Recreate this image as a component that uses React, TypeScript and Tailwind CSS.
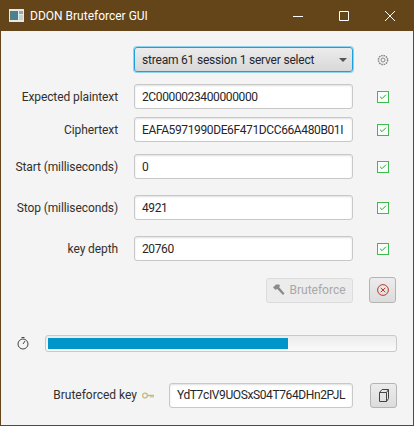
import { Check } from 'lucide-react'

const font = '[font-family:Roboto,"Noto_Sans",sans-serif]'

function CheckMark() {
  return (
    <div className="flex h-[12px] w-[12px] items-center justify-center border border-[#3fb950] bg-[#f8fff8]">
      <Check size={8} strokeWidth={3} className="text-[#2ea043]" />
    </div>
  )
}

function Row({ label, value, className }: { label: string; value: string; className: string }) {
  return (
    <div className={`flex h-[25px] items-center ${className}`}>
      <div className="w-[117px] text-right text-[12px] tracking-[-0.1px] text-[#33302c]">{label}</div>
      <div className="ml-[16px] flex h-[25px] w-[219px] items-center overflow-hidden whitespace-nowrap rounded-[3px] border border-[#c8c8c8] bg-white px-[7px] text-[12px] tracking-[-0.38px] text-[#26262a] shadow-[inset_0_1px_2px_#e0e0e0]">
        {value}
      </div>
      <div className="ml-[24px]">
        <CheckMark />
      </div>
    </div>
  )
}

export default function App() {
  return (
    <div className={`flex h-[426px] w-[414px] flex-col border border-t-0 border-[#64461a] bg-[#f4f4f4] ${font}`}>
      {/* Title bar */}
      <div className="-mx-px flex h-[31px] shrink-0 items-center bg-[#64451a] text-white">
        <svg width="15" height="13" viewBox="0 0 15 13" className="ml-[9px]">
          <rect width="15" height="13" fill="#e8e8e8" />
          <rect x="1" y="2" width="8" height="9" fill="#4f7f88" />
          <rect x="10" y="2" width="4" height="3" fill="#8fa9ae" />
          <rect x="10" y="6" width="4" height="5" fill="#c4d0d2" />
        </svg>
        <span className="ml-[6px] text-[12px]">DDON Bruteforcer GUI</span>
        <div className="ml-auto flex items-center">
          <svg width="10" height="10" viewBox="0 0 10 10" className="mr-[36px]">
            <path d="M0 5.5h10" stroke="#fff" />
          </svg>
          <svg width="10" height="10" viewBox="0 0 10 10" className="mr-[36px]">
            <path d="M.5.5h9v9h-9z" stroke="#fff" fill="none" />
          </svg>
          <svg width="10" height="10" viewBox="0 0 10 10" className="mr-[19px]">
            <path d="M0 0l10 10M10 0L0 10" stroke="#fff" />
          </svg>
        </div>
      </div>

      {/* Server select */}
      <div className="mt-[16px] flex h-[25px] items-center">
        <div className="ml-[133px] flex h-[25px] w-[219px] items-center rounded-[3px] border border-[#1ba1e2] bg-linear-to-b from-[#ececec] to-[#d8d8d8] pl-[7px] text-[12px] tracking-[-0.2px] text-[#26262a] shadow-[0_0_0_1px_#8fd3ef]">
          stream 61 session 1 server select
          <div className="ml-auto mr-[5px] h-0 w-0 border-x-[4px] border-t-[4px] border-x-transparent border-t-[#555]" />
        </div>
        <svg width="12" height="12" viewBox="0 0 12 12" className="ml-[24px]" fill="none" stroke="#888">
          <circle cx="6" cy="6" r="2" />
          <circle cx="6" cy="6" r="4.6" strokeDasharray="1.6 0.8" strokeWidth="1.5" />
        </svg>
      </div>

      <Row className="mt-[12px]" label="Expected plaintext" value="2C0000023400000000" />
      <Row className="mt-[8px]" label="Ciphertext" value="EAFA5971990DE6F471DCC66A480B01I" />
      <Row className="mt-[12px]" label="Start (milliseconds)" value="0" />
      <Row className="mt-[16px]" label="Stop (milliseconds)" value="4921" />
      <Row className="mt-[16px]" label="key depth" value="20760" />

      {/* Actions */}
      <div className="mt-[16px] flex h-[26px] items-center">
        <div className="ml-[265px] flex h-[25px] w-[87px] items-center justify-center gap-[4px] rounded-[3px] border border-[#dcdcdc] bg-[#ececec] text-[12px] text-[#a8a8a8]">
          <svg width="12" height="12" viewBox="0 0 12 12" fill="#8a8a8a">
            <path d="M0 3.5L3 .5h3l1.2 1.2L6 3l5.5 6.5L10 11 4 4.8 2.8 6z" />
          </svg>
          Bruteforce
        </div>
        <div className="ml-[16px] flex h-[26px] w-[27px] items-center justify-center rounded-[3px] border border-[#b4b4b4] bg-linear-to-b from-[#ececec] to-[#dcdcdc]">
          <svg width="12" height="12" viewBox="0 0 12 12" fill="none" stroke="#c0392b">
            <circle cx="6" cy="6" r="5.4" />
            <path d="M3.8 3.8l4.4 4.4M8.2 3.8L3.8 8.2" />
          </svg>
        </div>
      </div>

      {/* Progress */}
      <div className="mt-[32px] flex items-center">
        <svg width="12" height="13" viewBox="0 0 12 13" className="ml-[16px]" fill="none" stroke="#444">
          <circle cx="6" cy="7" r="5" />
          <path d="M6 7l2-3M4.5.5h3" />
        </svg>
        <div className="ml-[16px] h-[17px] w-[352px] rounded-[3px] border border-[#c8c8c8] bg-linear-to-b from-[#ececec] to-[#fafafa] p-[2px]">
          <div className="h-full w-[240px] bg-[#0096c9]" />
        </div>
      </div>

      {/* Result */}
      <div className="mt-[30px] flex h-[26px] items-center">
        <span className="ml-[52px] w-[84px] text-right text-[12px] text-[#33302c]">Bruteforced key</span>
        <svg width="12" height="7" viewBox="0 0 12 7" className="ml-[5px]" fill="none" stroke="#c4bd78" strokeWidth="1.3">
          <circle cx="3" cy="3.5" r="2.4" />
          <path d="M5.5 3.5H12M9 3.5v2M11 3.5v2" />
        </svg>
        <div className="ml-[15px] flex h-[25px] w-[184px] items-center overflow-hidden whitespace-nowrap rounded-[3px] border border-[#c8c8c8] bg-white px-[7px] text-[12px] tracking-[-0.38px] text-[#26262a] shadow-[inset_0_1px_2px_#e0e0e0]">
          YdT7cIV9UOSxS04T764DHn2PJL
        </div>
        <div className="ml-[17px] flex h-[25px] w-[27px] items-center justify-center rounded-[3px] border border-[#b4b4b4] bg-linear-to-b from-[#ececec] to-[#dcdcdc]">
          <svg width="11" height="13" viewBox="0 0 11 13" fill="none" stroke="#444">
            <path d="M1.5 3.5L4 .5h6.5v9L8.5 12.5h-7zM1.5 3.5h7v9M8.5 3.5l2-3" />
          </svg>
        </div>
      </div>
    </div>
  )
}
